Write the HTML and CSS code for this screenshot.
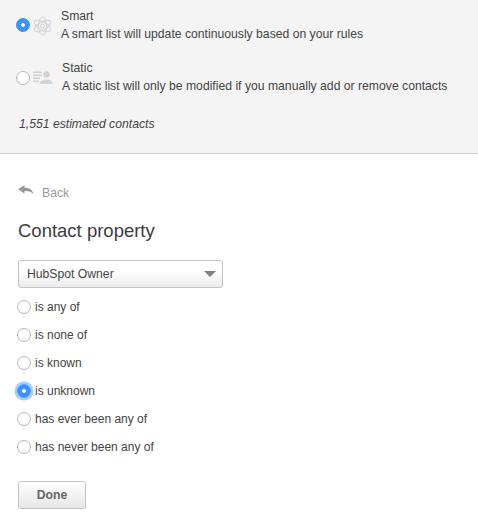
FILE: index.html
```
<!DOCTYPE html>
<html lang="en">
<head>
<meta charset="utf-8">
<title>Contact property</title>
<link rel="stylesheet" href="styles.css">
</head>
<body>
<section class="top">
  <div class="type type-smart">
    <span class="radio checked"></span>
    <svg class="atom" width="19" height="20" viewBox="0 0 19 20" fill="none" stroke="#d2d2d2" stroke-width="1">
      <ellipse cx="9.500" cy="10" rx="4" ry="9.300"/>
      <ellipse cx="9.500" cy="10" rx="4" ry="9.300" transform="rotate(60 9.500 10)"/>
      <ellipse cx="9.500" cy="10" rx="4" ry="9.300" transform="rotate(120 9.500 10)"/>
      <circle cx="9.500" cy="10" r="2"/>
    </svg>
    <div class="type-text">
      <div>Smart</div>
      <div>A smart list will update continuously based on your rules</div>
    </div>
  </div>
  <div class="type type-static">
    <span class="radio"></span>
    <svg class="person" width="20" height="13" viewBox="0 0 20 13" fill="#d2d2d2">
      <rect x="0" y="0.500" width="9" height="1.600"/>
      <rect x="0" y="3.500" width="9" height="1.600"/>
      <rect x="0" y="6.500" width="7" height="1.600"/>
      <rect x="0" y="9.500" width="6" height="1.600"/>
      <circle cx="13.500" cy="3.500" r="3.300"/>
      <path d="M6.500 13c.3-3 3.500-3.600 5-4.500h4c1.500.9 4.200 1.500 4.500 4.500z"/>
    </svg>
    <div class="type-text">
      <div>Static</div>
      <div>A static list will only be modified if you manually add or remove contacts</div>
    </div>
  </div>
  <p class="estimate">1,551 estimated contacts</p>
</section>
<section class="main">
  <a class="back">
    <svg width="16" height="10" viewBox="0 0 16 10" fill="#999"><path d="M0 4.200 6.500 0v2.800c4.500 0 8 1.800 9 6.400-2-2.700-4.500-3.300-9-3.200V8.500z"/></svg>
    <span>Back</span>
  </a>
  <h1>Contact property</h1>
  <div class="select"><span>HubSpot Owner</span><i class="caret"></i></div>
  <ul class="options">
    <li><span class="radio"></span>is any of</li>
    <li><span class="radio"></span>is none of</li>
    <li><span class="radio"></span>is known</li>
    <li><span class="radio checked focus"></span>is unknown</li>
    <li><span class="radio"></span>has ever been any of</li>
    <li><span class="radio"></span>has never been any of</li>
  </ul>
  <button class="done" type="button">Done</button>
</section>
</body>
</html>
```
FILE: styles.css
```
* { box-sizing: border-box; }
html, body { margin: 0; padding: 0; }
body {
  width: 478px;
  height: 524px;
  overflow: hidden;
  background: #fff;
  font-family: "Liberation Sans", Arial, sans-serif;
  font-size: 12.2px;
  color: #444;
}
.top {
  height: 154px;
  background: #f4f4f4;
  border-bottom: 1px solid #cfcfcf;
  padding-top: 7px;
}
.type { display: flex; align-items: flex-start; line-height: 18px; }
.type-smart { padding-left: 16px; }
.type-static { padding-left: 16px; margin-top: 16px; }
.type-smart .radio { margin-top: 11px; }
.type-static .radio { margin-top: 2px; align-self: center; }
.atom { margin: 9px 0 0 3px; flex: none; }
.type-smart .type-text { margin-left: 9px; }
.person { margin: 0 0 0 3px; align-self: center; flex: none; }
.type-static .type-text { margin-left: 9px; }
.estimate {
  margin: 21px 0 0 19px;
  font-style: italic;
  line-height: 16px;
  color: #444;
}
.radio {
  display: block;
  flex: none;
  width: 14px;
  height: 14px;
  border-radius: 50%;
  background: #fff;
  border: 1px solid #b5b5b5;
}
.radio.checked {
  background: radial-gradient(circle, #fff 0 1.5px, #3d93fb 2.2px);
  border-color: #3b8ff5;
}
.radio.focus { box-shadow: 0 0 0 2.5px #a3cdfb; }
.main { padding: 31px 0 0 18px; }
.back {
  display: flex;
  align-items: flex-start;
  height: 16px;
  color: #999;
  line-height: 16px;
}
.back span { margin-left: 8px; }
h1 {
  margin: 19px 0 0;
  font-size: 18.5px;
  font-weight: 400;
  line-height: 22px;
  color: #3c3c3c;
}
.select {
  display: flex;
  align-items: center;
  justify-content: space-between;
  width: 205px;
  height: 28px;
  margin-top: 18px;
  padding: 0 6px 0 8px;
  border: 1px solid #c4c4c4;
  border-radius: 3px;
  background: linear-gradient(#fff 40%, #ebebeb);
}
.caret {
  width: 0;
  height: 0;
  border-left: 6px solid transparent;
  border-right: 6px solid transparent;
  border-top: 6px solid #808080;
}
.options { list-style: none; margin: 5px 0 0; padding: 0; font-size: 12px; }
.options li {
  display: flex;
  align-items: center;
  height: 28px;
  margin-left: -1px;
  gap: 4px;
}
.done {
  display: block;
  width: 68px;
  height: 28px;
  margin-top: 20px;
  padding: 0;
  border: 1px solid #c4c4c4;
  border-radius: 3px;
  background: linear-gradient(#fff, #e6e6e6);
  font: bold 12.2px "Liberation Sans", Arial, sans-serif;
  color: #666;
}
```
